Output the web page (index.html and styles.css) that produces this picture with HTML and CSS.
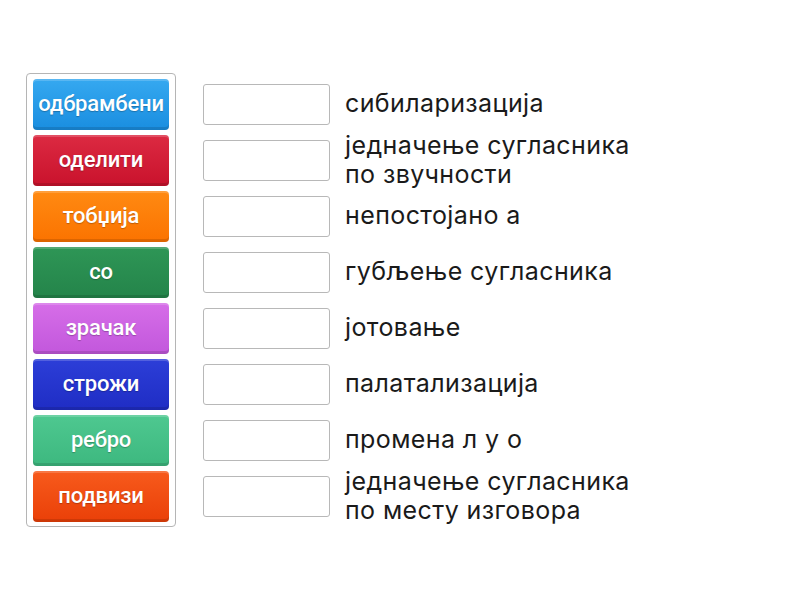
FILE: index.html
```html
<!DOCTYPE html>
<html>
<head>
<meta charset="utf-8">
<link rel="stylesheet" href="styles.css">
</head>
<body>
<div class="page">
  <div class="bank">
    <div class="tile t1">одбрамбени</div>
    <div class="tile t2">оделити</div>
    <div class="tile t3">тобџија</div>
    <div class="tile t4">со</div>
    <div class="tile t5">зрачак</div>
    <div class="tile t6">строжи</div>
    <div class="tile t7">ребро</div>
    <div class="tile t8">подвизи</div>
  </div>
  <div class="rows">
    <div class="row"><div class="slot"></div><div class="label">сибиларизација</div></div>
    <div class="row"><div class="slot"></div><div class="label">једначење сугласника<br>по звучности</div></div>
    <div class="row"><div class="slot"></div><div class="label">непостојано а</div></div>
    <div class="row"><div class="slot"></div><div class="label">губљење сугласника</div></div>
    <div class="row"><div class="slot"></div><div class="label">јотовање</div></div>
    <div class="row"><div class="slot"></div><div class="label">палатализација</div></div>
    <div class="row"><div class="slot"></div><div class="label">промена л у о</div></div>
    <div class="row"><div class="slot"></div><div class="label">једначење сугласника<br>по месту изговора</div></div>
  </div>
</div>
</body>
</html>
```
FILE: styles.css
```css
html, body {
  margin: 0;
  padding: 0;
  background: #ffffff;
}
body {
  width: 800px;
  height: 600px;
  overflow: hidden;
  font-family: Inter, "Noto Sans", sans-serif;
}
.page {
  display: flex;
  align-items: flex-start;
  padding-top: 73px;
  padding-left: 26px;
}
.bank {
  display: flex;
  flex-direction: column;
  gap: 5px;
  padding: 5px 6px 4px 6px;
  border: 1px solid #b5b5b5;
  border-radius: 4px;
  width: 136px;
}
.tile {
  height: 51px;
  border-radius: 4px;
  display: flex;
  align-items: center;
  justify-content: center;
  color: #fff;
  font-family: Roboto, "Noto Sans", sans-serif;
  font-weight: 500;
  font-size: 22px;
  letter-spacing: -0.2px;
  text-shadow: 0 1px 1px rgba(0,0,0,0.25);
  box-shadow: inset 0 -3px 0 rgba(0,0,0,0.12), inset 0 2px 0 rgba(255,255,255,0.18);
  box-sizing: border-box;
  padding-bottom: 2px;
}
.t1 { background: linear-gradient(#35a8f0, #1a8ee0); }
.t2 { background: linear-gradient(#dc2a42, #c9122c); }
.t3 { background: linear-gradient(#ff8a12, #fb7300); }
.t4 { background: linear-gradient(#2e9656, #24844a); }
.t5 { background: linear-gradient(#d66ee8, #c257dc); }
.t6 { background: linear-gradient(#2c3ed8, #1f2dc4); }
.t7 { background: linear-gradient(#4ec890, #3db87f); }
.t8 { background: linear-gradient(#f75a1c, #ea4008); }
.rows {
  display: flex;
  flex-direction: column;
  margin-left: 27px;
  margin-top: 6px;
}
.row {
  height: 56px;
  display: flex;
  align-items: center;
  gap: 15px;
}
.slot {
  width: 127px;
  height: 41px;
  box-sizing: border-box;
  border: 1px solid #b8b8b8;
  border-radius: 3px;
  flex: none;
  margin-top: -5px;
}
.label {
  font-size: 25px;
  line-height: 29px;
  letter-spacing: 0.4px;
  color: #1a1a1a;
  margin-top: -7px;
}
```
